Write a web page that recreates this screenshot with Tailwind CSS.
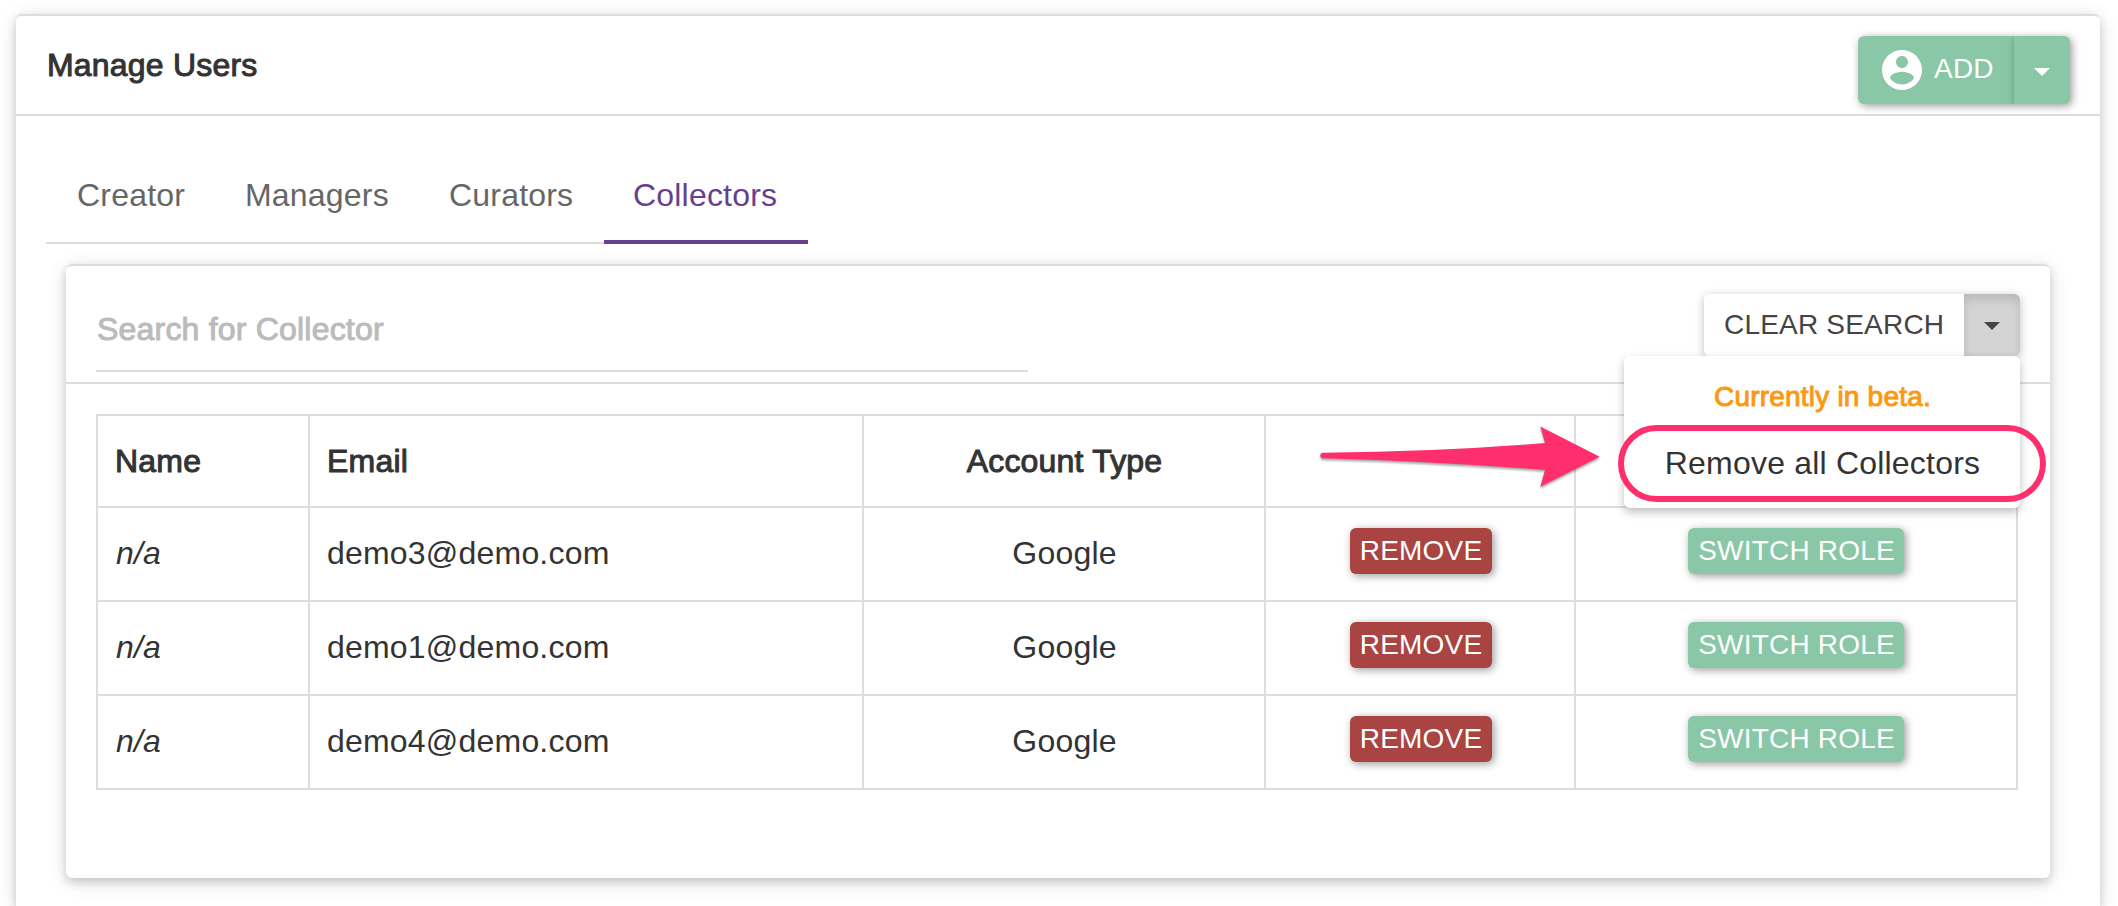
<!DOCTYPE html>
<html lang="en">
<head>
<meta charset="utf-8">
<title>Manage Users</title>
<script src="https://cdn.jsdelivr.net/npm/@tailwindcss/browser@4"></script>
</head>
<body class="relative h-[906px] w-[2118px] overflow-hidden bg-white font-['Liberation_Sans',Arial,sans-serif] text-[32px] leading-[36px] tracking-[0.2px] text-[#333]">
<main class="mt-3.5 mr-[18px] ml-4 h-[892px] rounded-t-md border-t-2 border-[#ddd] bg-white shadow-[0_4px_10px_rgba(0,0,0,0.16),0_4px_20px_rgba(0,0,0,0.12)]">
  <header class="flex h-[100px] items-start justify-between border-b-2 border-[#ddd] pr-[30px] pl-[31px]">
    <h1 class="pt-[31px] [-webkit-text-stroke:1px_currentColor]">Manage Users</h1>
    <div class="mt-5 flex h-[68px] rounded-md text-[28px] leading-[31px] text-white">
      <button class="flex w-[156px] items-start rounded-l-md bg-[#89c7a6] pl-5 shadow-[2px_2px_8px_rgba(0,0,0,0.4)]">
        <svg class="mt-2.5 size-12 shrink-0" viewBox="0 0 24 24" fill="currentColor"><path d="M12 2C6.48 2 2 6.48 2 12s4.48 10 10 10 10-4.480 10-10S17.520 2 12 2zm0 3c1.660 0 3 1.340 3 3s-1.340 3-3 3-3-1.340-3-3 1.340-3 3-3zm0 14.200c-2.500 0-4.710-1.280-6-3.220.030-1.990 4-3.080 6-3.080 1.990 0 5.970 1.090 6 3.080-1.290 1.940-3.500 3.220-6 3.220z"/></svg>
        <span class="ml-2 pt-[17px]">ADD</span>
      </button>
      <button class="z-10 flex w-14 justify-center rounded-r-md bg-[#89c7a6] pt-8 shadow-[2px_2px_8px_rgba(0,0,0,0.4)]">
        <svg class="h-2 w-4" viewBox="0 0 16 8" fill="currentColor"><path d="M0 0h16L8 8z"/></svg>
      </button>
    </div>
  </header>

  <nav class="mt-[31px] ml-[30px] flex h-[97px] text-[#666]">
    <a class="w-[168px] border-b-2 border-[#ddd] pt-[30px] pl-[31px]">Creator</a>
    <a class="w-[204px] border-b-2 border-[#ddd] pt-[30px] pl-[31px]">Managers</a>
    <a class="w-[186px] border-b-2 border-[#ddd] pt-[30px] pl-[31px]">Curators</a>
    <a class="w-[204px] border-b-4 border-[#673f8f] pt-[30px] pl-[29px] text-[#673f8f]">Collectors</a>
  </nav>

  <section class="mt-5 mr-[50px] ml-[50px] h-[614px] rounded-md border-t-2 border-[#ddd] bg-white shadow-[0_4px_10px_rgba(0,0,0,0.16),0_4px_20px_rgba(0,0,0,0.12)]">
    <div class="flex h-[118px] items-start justify-between border-b-2 border-[#ddd] px-[30px]">
      <div class="h-[106px] w-[932px] border-b-2 border-[#ddd] pt-[45px] pl-px text-[#bbb] [-webkit-text-stroke:1px_currentColor]">Search for Collector</div>
      <div class="relative mt-7 flex h-[62px] rounded-md text-[28px] leading-[31px] text-[#444] shadow-[0_2px_10px_rgba(0,0,0,0.26)]">
        <button class="flex w-[260px] items-start rounded-l-md bg-white pt-[15px] pl-5 whitespace-nowrap">CLEAR SEARCH</button>
        <button class="flex w-14 justify-center rounded-r-md bg-[#d4d4d4] pt-7 shadow-[inset_0_6px_10px_rgba(0,0,0,0.125)]">
          <svg class="h-2 w-4" viewBox="0 0 16 8" fill="currentColor"><path d="M0 0h16L8 8z"/></svg>
        </button>
        <div class="absolute top-[62px] right-0 z-20 flex h-[152px] w-[396px] flex-col items-center rounded-md bg-white pt-[25px] shadow-[0_4px_10px_rgba(0,0,0,0.26)]">
          <span class="pl-px text-[#fb9913] [-webkit-text-stroke:1px_currentColor]">Currently in beta.</span>
          <span class="mt-[33px] pl-px text-[32px] leading-[36px] text-[#333]">Remove all Collectors</span>
          <div class="absolute top-[69px] -left-1.5 h-[77px] w-[428px] rounded-full border-6 border-[#ff2f6e]"></div>
        </div>
      </div>
    </div>

    <div class="mt-[30px] ml-[30px] grid w-[1922px] grid-cols-[212px_554px_402px_310px_442px] grid-rows-[92px_94px_94px_94px] border-t-2 border-l-2 border-[#ddd] *:border-r-2 *:border-b-2 *:border-[#ddd]">
      <div class="pt-[27px] pl-[17px] [-webkit-text-stroke:1px_currentColor]">Name</div>
      <div class="pt-[27px] pl-[17px] [-webkit-text-stroke:1px_currentColor]">Email</div>
      <div class="pt-[27px] pl-px text-center [-webkit-text-stroke:1px_currentColor]">Account Type</div>
      <div></div>
      <div></div>

      <div class="pt-[27px] pl-[18px] italic">n/a</div>
      <div class="pt-[27px] pl-[17px]">demo3@demo.com</div>
      <div class="pt-[27px] pl-px text-center">Google</div>
      <div class="flex items-start justify-center pt-5 pl-0.5"><button class="h-[46px] w-[142px] rounded-md bg-[#a94442] pb-px text-[28px] leading-[31px] text-white shadow-[2px_2px_8px_rgba(0,0,0,0.4)]">REMOVE</button></div>
      <div class="flex items-start justify-center pt-5"><button class="h-[46px] w-[216px] rounded-md bg-[#89c7a6] pb-px pl-px text-[28px] leading-[31px] whitespace-nowrap text-white shadow-[2px_2px_8px_rgba(0,0,0,0.4)]">SWITCH ROLE</button></div>

      <div class="pt-[27px] pl-[18px] italic">n/a</div>
      <div class="pt-[27px] pl-[17px]">demo1@demo.com</div>
      <div class="pt-[27px] pl-px text-center">Google</div>
      <div class="flex items-start justify-center pt-5 pl-0.5"><button class="h-[46px] w-[142px] rounded-md bg-[#a94442] pb-px text-[28px] leading-[31px] text-white shadow-[2px_2px_8px_rgba(0,0,0,0.4)]">REMOVE</button></div>
      <div class="flex items-start justify-center pt-5"><button class="h-[46px] w-[216px] rounded-md bg-[#89c7a6] pb-px pl-px text-[28px] leading-[31px] whitespace-nowrap text-white shadow-[2px_2px_8px_rgba(0,0,0,0.4)]">SWITCH ROLE</button></div>

      <div class="pt-[27px] pl-[18px] italic">n/a</div>
      <div class="pt-[27px] pl-[17px]">demo4@demo.com</div>
      <div class="pt-[27px] pl-px text-center">Google</div>
      <div class="flex items-start justify-center pt-5 pl-0.5"><button class="h-[46px] w-[142px] rounded-md bg-[#a94442] pb-px text-[28px] leading-[31px] text-white shadow-[2px_2px_8px_rgba(0,0,0,0.4)]">REMOVE</button></div>
      <div class="flex items-start justify-center pt-5"><button class="h-[46px] w-[216px] rounded-md bg-[#89c7a6] pb-px pl-px text-[28px] leading-[31px] whitespace-nowrap text-white shadow-[2px_2px_8px_rgba(0,0,0,0.4)]">SWITCH ROLE</button></div>
    </div>
  </section>
</main>

<!-- Callout arrow pointing at the highlighted menu item -->
<svg class="absolute top-[420px] left-[1310px] h-[80px] w-[300px] drop-shadow-[0_2px_1px_rgba(0,0,0,0.35)]" viewBox="0 0 300 80" fill="#ff2f6e"><path d="M13 32.700Q130 31.500 235 23L230.300 6.500L289.700 36.700L230.300 66.700L235 50Q130 41.500 13 38.200Q10.300 38 10.300 35.500Q10.300 33 13 32.700Z"/></svg>
</body>
</html>
